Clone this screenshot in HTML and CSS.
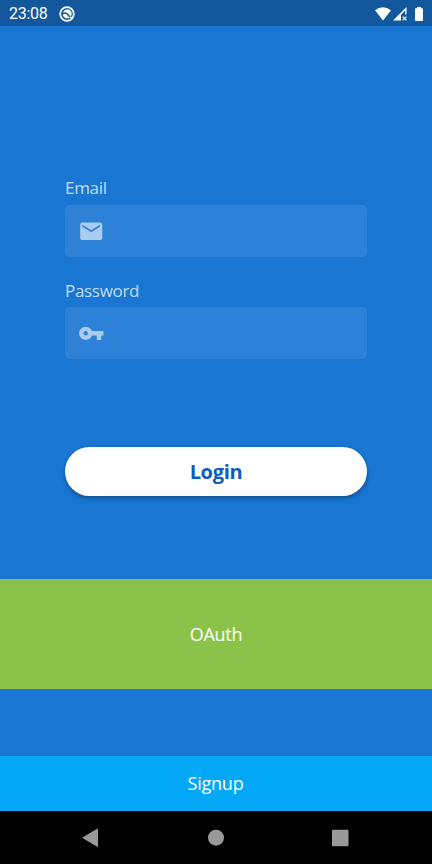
FILE: index.html
```html
<!DOCTYPE html>
<html lang="en">
<head>
<meta charset="utf-8">
<title>Login</title>
<link rel="stylesheet" href="styles.css">
</head>
<body>
<div class="screen">
  <header class="status">
    <span class="time">23:08</span>
    <svg class="app-icon" viewBox="0 0 16 16"><circle cx="8" cy="8" r="6.800" fill="none" stroke="#fff" stroke-width="1.700"/><path d="M4 6.800A4.400 4.400 0 1 1 11.600 10.600L9.600 8.300Q7 5 4 6.800Z" fill="#fff"/><path d="M3.800 8.900Q6 6.700 8 8.800L10.800 12Q5.500 13.500 3.800 8.900Z" fill="#fff"/><path d="M11.200 10.800 13.500 13" stroke="#fff" stroke-width="1.500"/></svg>
    <div class="indicators">
      <svg class="wifi" viewBox="0 0 16 14"><path d="M0 3.200Q8-2.800 16 3.200L8 13.500Z" fill="#fff"/></svg>
      <svg class="signal" viewBox="0 0 14 14"><path d="M0 13.500 13.500 0V7.500H12.200V3.500L8 7.700V13.500Z" fill="#fff"/><path d="M9.600 9.600 13.400 13.400M13.400 9.600 9.600 13.400" stroke="#fff" stroke-width="1.200"/></svg>
      <svg class="battery" viewBox="0 0 8 14"><path d="M2 0H6V1.300H7.200Q8 1.300 8 2.100V13.200Q8 14 7.200 14H.8Q0 14 0 13.200V2.100Q0 1.300.8 1.300H2Z" fill="#fff"/></svg>
    </div>
  </header>
  <main class="form">
    <label class="label">Email</label>
    <div class="field">
      <svg class="field-icon" viewBox="0 0 24 24"><path d="M20 4H4c-1.100 0-1.990.9-1.990 2L2 18c0 1.100.9 2 2 2h16c1.100 0 2-.9 2-2V6c0-1.100-.9-2-2-2zm0 4l-8 5-8-5V6l8 5 8-5v2z"/></svg>
    </div>
    <label class="label label-password">Password</label>
    <div class="field">
      <svg class="field-icon" viewBox="0 0 24 24"><path d="M12.650 10C11.830 7.670 9.610 6 7 6c-3.310 0-6 2.690-6 6s2.690 6 6 6c2.610 0 4.830-1.670 5.650-4H17v4h4v-4h2v-4H12.650zM7 14c-1.100 0-2-.9-2-2s.9-2 2-2 2 .9 2 2-.9 2-2 2z"/></svg>
    </div>
    <button class="login">Login</button>
  </main>
  <div class="oauth">OAuth</div>
  <div class="signup">Signup</div>
  <nav class="nav">
    <svg viewBox="0 0 18 20"><path d="M15.200.7Q16 .3 16 1.300V18.300Q16 19.300 15.200 18.800L.8 10.300Q0 9.700.8 9.200Z"/></svg>
    <svg viewBox="0 0 18 20"><circle cx="9" cy="9.700" r="8"/></svg>
    <svg viewBox="0 0 18 20"><rect x="1" y="1.700" width="16.500" height="16.500" rx="1"/></svg>
  </nav>
</div>
</body>
</html>
```
FILE: styles.css
```css
* { box-sizing: border-box; }
body { margin: 0; }
.screen {
  width: 432px;
  height: 864px;
  display: flex;
  flex-direction: column;
  background: #1976d2;
  color: #fff;
  font-family: "Open Sans", sans-serif;
  overflow: hidden;
}
.status {
  height: 26px;
  flex: none;
  display: flex;
  align-items: center;
  padding: 1px 9px 0 9px;
  background: #13589d;
}
.time {
  font: 16px/26px Roboto, sans-serif;
  letter-spacing: -.25px;
  padding-top: 1px;
  width: 50px;
}
.app-icon { width: 16px; height: 16px; }
.indicators { margin-left: auto; display: flex; align-items: center; }
.wifi { width: 16px; height: 14px; margin-right: 2px; }
.signal { width: 14px; height: 14px; margin-right: 8px; }
.battery { width: 8px; height: 14px; }
.form {
  height: 553px;
  flex: none;
  padding: 150px 65px 0;
}
.label {
  display: block;
  height: 24px;
  margin-bottom: 5px;
  font-size: 17px;
  letter-spacing: -.3px;
  line-height: 23px;
  color: rgba(255, 255, 255, .75);
}
.label-password { line-height: 25px; }
.field {
  height: 52px;
  margin-bottom: 21px;
  padding-left: 13px;
  display: flex;
  align-items: center;
  border-radius: 5px;
  background: #2d82d7;
}
.field-icon { width: 26.500px; height: 26.500px; fill: #abcced; }
.login {
  display: block;
  width: 100%;
  height: 49px;
  margin-top: 88px;
  padding: 0;
  border: 0;
  border-radius: 25px;
  background: #fff;
  box-shadow: 0 2px 4px rgba(0, 0, 0, .35);
  color: #0d5bbe;
  font: bold 20px/48px "Open Sans", sans-serif;
  letter-spacing: -.3px;
}
.oauth {
  height: 110px;
  flex: none;
  background: #8bc34a;
  font-size: 18px;
  letter-spacing: -.25px;
  line-height: 110px;
  text-align: center;
}
.signup {
  height: 55px;
  flex: none;
  margin-top: 67px;
  padding-right: 1px;
  background: #03a9f7;
  font-size: 18px;
  letter-spacing: -.25px;
  line-height: 55px;
  text-align: center;
}
.nav {
  flex: 1;
  display: flex;
  justify-content: space-between;
  padding: 17px 83px 0 82px;
  background: #000;
}
.nav svg { width: 18px; height: 20px; fill: #999; }
```
